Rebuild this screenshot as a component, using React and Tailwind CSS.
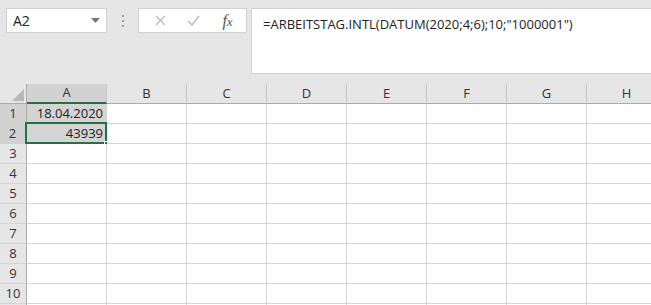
import React from 'react';

const cols = ['A', 'B', 'C', 'D', 'E', 'F', 'G', 'H'];
const rows = [1, 2, 3, 4, 5, 6, 7, 8, 9, 10, 11];

const font = { fontFamily: '"Segoe UI", "Open Sans", "Noto Sans", sans-serif' };

function Cell({ row, col }) {
  const selected = col === 'A' && row === 2;
  const shaded = col === 'A' && (row === 1 || row === 2);
  let text = '';
  if (col === 'A' && row === 1) text = '18.04.2020';
  if (col === 'A' && row === 2) text = '43939';
  return (
    <div
      className={
        'relative w-[80px] h-[20px] shrink-0 border-r border-b border-[#d4d4d4] text-[13px] text-[#222] flex items-center justify-end pr-[3px] ' +
        (shaded ? 'bg-[#d4d4d4] ' : 'bg-white ')
      }
    >
      {text}
      {selected && (
        <>
          <div className="absolute left-[-2px] top-[-2px] w-[82px] h-[22px] border-2 border-[#217346]" />
          <div className="absolute right-[-4px] bottom-[-4px] w-[6px] h-[6px] bg-[#217346] border border-white" />
        </>
      )}
    </div>
  );
}

export default function App() {
  return (
    <div className="w-[651px] h-[305px] overflow-hidden bg-[#e6e6e6] select-none" style={font}>
      {/* formula bar */}
      <div className="h-[84px] pt-[8px] flex items-start">
        <div className="ml-[6px] w-[101px] h-[25px] bg-white border border-[#d0d0d0] flex items-center pl-[6px] pr-[6px] text-[14px] text-[#222]">
          <span className="flex-1">A2</span>
          <svg width="9" height="5" viewBox="0 0 9 5"><path d="M0 0h9L4.5 5z" fill="#777" /></svg>
        </div>
        <div className="w-[31px] h-[25px] flex flex-col items-center justify-center gap-[3px]">
          <div className="w-[2px] h-[2px] bg-[#a0a0a0]" />
          <div className="w-[2px] h-[2px] bg-[#a0a0a0]" />
          <div className="w-[2px] h-[2px] bg-[#a0a0a0]" />
        </div>
        <div className="w-[109px] h-[25px] bg-white border border-[#d0d0d0] flex items-center">
          <div className="w-[38px] flex justify-center pl-[4px]">
            <svg width="11" height="11" viewBox="0 0 11 11"><path d="M1 1l9 9M10 1l-9 9" stroke="#bdbdbd" strokeWidth="1.4" /></svg>
          </div>
          <div className="w-[32px] flex justify-center">
            <svg width="13" height="11" viewBox="0 0 13 11"><path d="M1 6l4 4 7-9" stroke="#bdbdbd" strokeWidth="1.6" fill="none" /></svg>
          </div>
          <div className="w-[37px] flex justify-center items-baseline text-[16px] leading-none text-[#555] italic" style={{ fontFamily: '"Liberation Serif", serif' }}>
            <span>f</span><span className="text-[13px]">x</span>
          </div>
        </div>
        <div className="ml-[4px] flex-1 h-[66px] bg-white border border-r-0 border-[#d0d0d0] pl-[11px] pt-[6px] text-[13px] text-[#222]">
          =ARBEITSTAG.INTL(DATUM(2020;4;6);10;"1000001")
        </div>
      </div>

      {/* column headers */}
      <div className="flex h-[20px] bg-[#e6e6e6]">
        <div className="relative w-[27px] shrink-0 border-r border-b border-[#ababab]">
          <svg className="absolute right-[2px] bottom-[2px]" width="12" height="12" viewBox="0 0 12 12"><path d="M12 0v12H0z" fill="#b8b8b8" /></svg>
        </div>
        {cols.map(c => (
          <div
            key={c}
            className={
              'w-[80px] shrink-0 border-r border-[#c6c6c6] flex items-center justify-center text-[13px] text-[#333] ' +
              (c === 'A' ? 'bg-[#d2d2d2] border-b-2 border-b-[#217346]' : 'border-b border-b-[#ababab]')
            }
          >
            {c}
          </div>
        ))}
      </div>

      {/* rows */}
      {rows.map(r => (
        <div key={r} className="flex h-[20px]">
          <div
            className={
              'w-[27px] shrink-0 border-r border-b border-r-[#ababab] border-b-[#d4d4d4] flex items-center justify-center text-[13px] text-[#333] ' +
              (r === 2 ? 'bg-[#d2d2d2] border-r-2 border-r-[#217346]' : r === 1 ? 'bg-[#d2d2d2]' : 'bg-[#e6e6e6]')
            }
          >
            {r <= 10 ? r : ''}
          </div>
          {cols.map(c => (
            <Cell key={c} row={r} col={c} />
          ))}
        </div>
      ))}
    </div>
  );
}
